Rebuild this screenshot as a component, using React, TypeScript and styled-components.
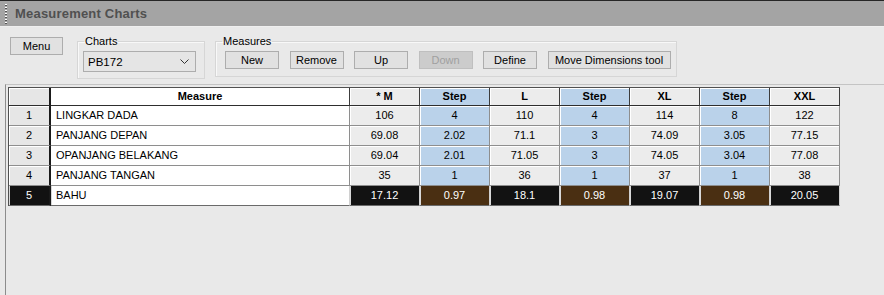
import React from "react";
import styled, { createGlobalStyle, css } from "styled-components";

const Global = createGlobalStyle`
  html, body { margin: 0; padding: 0; background: #e9e9e9; }
  body { font-family: "Liberation Sans", Arial, sans-serif; font-size: 11px; color: #000; }
  * { box-sizing: border-box; }
`;

const Root = styled.div`
  width: 884px;
  height: 295px;
  overflow: hidden;
  display: flex;
  flex-direction: column;
  background: #e9e9e9;
`;

const TitleBar = styled.div`
  height: 27px;
  flex: none;
  border-top: 1px solid #262626;
  border-bottom: 1px solid #efefef;
  background: #a4a4a4;
  display: flex;
  align-items: center;
  padding-left: 5px;
`;

const Grip = styled.span`
  width: 2px;
  height: 20px;
  background-image: linear-gradient(to bottom, #ffffff 0 1px, #555 1px 2px, transparent 2px 3px);
  background-size: 2px 3px;
`;

const Title = styled.h1`
  margin: 0 0 0 8px;
  font-family: "Liberation Sans", Arial, sans-serif;
  font-size: 13px;
  font-weight: bold;
  color: #505050;
  letter-spacing: 0.2px;
`;

const Toolbar = styled.div`
  display: flex;
  align-items: flex-start;
  padding: 8px 0 0 10px;
  flex: none;
`;

const Button = styled.button<{ $w?: number; $disabled?: boolean }>`
  width: ${(p) => p.$w ?? 54}px;
  height: 18px;
  padding: 0;
  font-family: "Liberation Sans", Arial, sans-serif;
  font-size: 11px;
  color: ${(p) => (p.$disabled ? "#a0a0a0" : "#000")};
  background: ${(p) => (p.$disabled ? "#cccccc" : "#e1e1e1")};
  border: 1px solid ${(p) => (p.$disabled ? "#bfbfbf" : "#adadad")};
  flex: none;
`;

const MenuButton = styled(Button)`
  margin-top: 2px;
`;

const Group = styled.fieldset<{ $ml: number; $w: number }>`
  margin: 0 0 0 ${(p) => p.$ml}px;
  width: ${(p) => p.$w}px;
  min-width: 0;
  padding: 3px 5px 6px 5px;
  border: 1px solid #d6d6d6;
  box-shadow: inset 1px 1px 0 #f8f8f8;
  border-radius: 0;
`;

const Legend = styled.legend`
  padding: 0 1px;
  margin-left: 1px;
  font-size: 11px;
  line-height: 13px;
  color: #000;
`;

const Select = styled.div`
  width: 113px;
  height: 21px;
  border: 1px solid #adadad;
  background: #e5e5e5;
  display: flex;
  align-items: center;
  justify-content: space-between;
  padding: 0 6px 0 4px;
  font-size: 11.5px;
`;

const ButtonRow = styled.div`
  display: flex;
  gap: 10.5px;
  padding: 0 0 1px 4px;
`;

const GridArea = styled.div`
  flex: 1;
  margin: 5px 0 0 5px;
  border-top: 1px solid #c4c4c4;
  border-left: 1px solid #8c8c8c;
  padding: 2px 0 0 2px;
`;

const Table = styled.table`
  border-collapse: separate;
  border-spacing: 0;
  table-layout: fixed;
  width: 832px;
  border-top: 1px solid #505050;
  border-left: 1px solid #505050;
  font-size: 11px;
  line-height: 13px;
`;

type Kind = "rowhead" | "measure" | "size" | "step";

const bgFor = (k: Kind, sel: boolean) => {
  if (sel) {
    if (k === "measure") return "#ffffff";
    if (k === "step") return "#4a2f12";
    return "#121212";
  }
  if (k === "measure") return "#ffffff";
  if (k === "step") return "#bad2ea";
  if (k === "rowhead") return "#e6e6e6";
  return "#ececec";
};

const HeadCell = styled.th<{ $kind: Kind }>`
  height: 18px;
  padding: 0;
  font-weight: bold;
  text-align: center;
  background: ${(p) => bgFor(p.$kind, false)};
  border-right: ${(p) => (p.$kind === "rowhead" ? "2px solid #1a1a1a" : "1px solid #3c3c3c")};
  border-bottom: 1px solid #2e2e2e;
  box-shadow: inset 1px 1px 0 #ffffff;
`;

const Cell = styled.td<{ $kind: Kind; $sel: boolean }>`
  height: 20px;
  padding: ${(p) => (p.$kind === "measure" ? "0 0 0 5px" : "0")};
  text-align: ${(p) => (p.$kind === "measure" ? "left" : "center")};
  white-space: nowrap;
  overflow: hidden;
  background: ${(p) => bgFor(p.$kind, p.$sel)};
  color: ${(p) => (p.$sel && p.$kind !== "measure" ? "#ffffff" : "#000")};
  border-right: ${(p) => (p.$kind === "rowhead" ? "2px solid #1a1a1a" : "1px solid #8e8e8e")};
  border-bottom: 1px solid #8e8e8e;
  ${(p) =>
    p.$sel
      ? css`
          box-shadow: inset 1px 0 0 #d8d8d8;
          border-right-color: ${p.$kind === "rowhead" ? "#1a1a1a" : "#d0d0d0"};
          border-bottom-color: #6a6a6a;
        `
      : css`
          box-shadow: inset 1px 1px 0 #ffffff;
        `}
`;

const Chevron = () => (
  <svg width="9" height="5" viewBox="0 0 9 5">
    <polyline points="0.5,0.5 4.5,4.5 8.5,0.5" fill="none" stroke="#333" strokeWidth="1" />
  </svg>
);

const cols: { label: string; kind: Kind; w: number }[] = [
  { label: "", kind: "rowhead", w: 42 },
  { label: "Measure", kind: "measure", w: 299 },
  { label: "* M", kind: "size", w: 70 },
  { label: "Step", kind: "step", w: 70 },
  { label: "L", kind: "size", w: 70 },
  { label: "Step", kind: "step", w: 70 },
  { label: "XL", kind: "size", w: 70 },
  { label: "Step", kind: "step", w: 70 },
  { label: "XXL", kind: "size", w: 70 },
];

const rows: string[][] = [
  ["1", "LINGKAR DADA", "106", "4", "110", "4", "114", "8", "122"],
  ["2", "PANJANG DEPAN", "69.08", "2.02", "71.1", "3", "74.09", "3.05", "77.15"],
  ["3", "OPANJANG BELAKANG", "69.04", "2.01", "71.05", "3", "74.05", "3.04", "77.08"],
  ["4", "PANJANG TANGAN", "35", "1", "36", "1", "37", "1", "38"],
  ["5", "BAHU", "17.12", "0.97", "18.1", "0.98", "19.07", "0.98", "20.05"],
];

const SELECTED = 4;

export default function App() {
  return (
    <Root>
      <Global />
      <TitleBar>
        <Grip />
        <Title>Measurement Charts</Title>
      </TitleBar>
      <Toolbar>
        <MenuButton $w={53}>Menu</MenuButton>
        <Group $ml={14} $w={128}>
          <Legend>Charts</Legend>
          <Select>
            <span>PB172</span>
            <Chevron />
          </Select>
        </Group>
        <Group $ml={10} $w={462}>
          <Legend>Measures</Legend>
          <ButtonRow>
            <Button>New</Button>
            <Button>Remove</Button>
            <Button>Up</Button>
            <Button $disabled>Down</Button>
            <Button>Define</Button>
            <Button $w={123}>Move Dimensions tool</Button>
          </ButtonRow>
        </Group>
      </Toolbar>
      <GridArea>
        <Table>
          <colgroup>
            {cols.map((c, i) => (
              <col key={i} style={{ width: c.w }} />
            ))}
          </colgroup>
          <thead>
            <tr>
              {cols.map((c, i) => (
                <HeadCell key={i} $kind={c.kind}>
                  {c.label}
                </HeadCell>
              ))}
            </tr>
          </thead>
          <tbody>
            {rows.map((r, ri) => (
              <tr key={ri}>
                {r.map((v, ci) => (
                  <Cell key={ci} $kind={cols[ci].kind} $sel={ri === SELECTED}>
                    {v}
                  </Cell>
                ))}
              </tr>
            ))}
          </tbody>
        </Table>
      </GridArea>
    </Root>
  );
}
